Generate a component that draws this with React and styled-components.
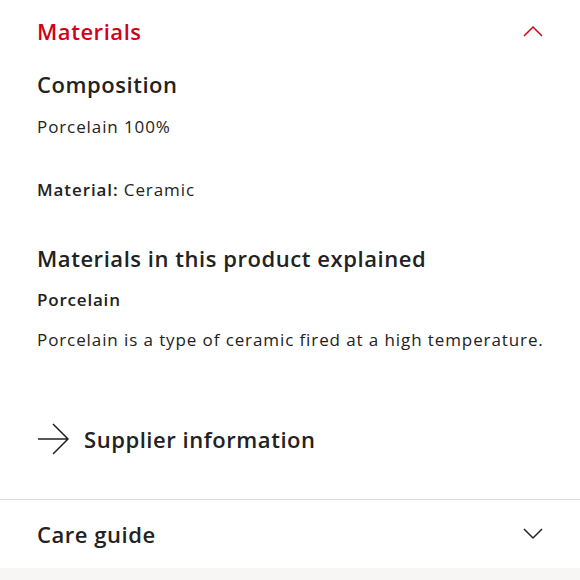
import React from 'react';
import styled, { createGlobalStyle } from 'styled-components';

const GlobalStyle = createGlobalStyle`
  body {
    margin: 0;
    background: #fff;
    font-family: "Open Sans", Lato, sans-serif;
    color: #222;
  }
`;

const Page = styled.div`
  width: 580px;
  height: 580px;
  display: flex;
  flex-direction: column;
  overflow: hidden;
`;

const Section = styled.section`
  padding: 0 37px;
  border-bottom: ${(p) => (p.divider ? '1px solid #dcdcdc' : 'none')};
`;

const Header = styled.div`
  display: flex;
  align-items: center;
  justify-content: space-between;
  height: ${(p) => p.h}px;
`;

const Title = styled.h2`
  margin: 0;
  font-size: 22px;
  font-weight: 600;
  line-height: 28px;
  letter-spacing: 0.55px;
  color: ${(p) => (p.active ? '#d0021b' : '#222')};
`;

const Heading = styled.h3`
  margin: 0;
  font-size: 22px;
  font-weight: 600;
  line-height: 28px;
  letter-spacing: 0.55px;
`;

const SubHeading = styled.h4`
  margin: 0;
  font-size: 17px;
  font-weight: 600;
  line-height: 24px;
  letter-spacing: 0.8px;
`;

const Text = styled.p`
  margin: 0;
  font-size: 17px;
  line-height: 24px;
  letter-spacing: 0.9px;
  white-space: nowrap;
  b {
    font-weight: 600;
  }
`;

const Block = styled.div`
  display: flex;
  flex-direction: column;
  margin-top: ${(p) => p.mt || 0}px;
`;

const LinkRow = styled.a`
  display: flex;
  align-items: center;
  gap: 14px;
  margin-top: ${(p) => p.mt || 0}px;
  padding-bottom: 44px;
  color: #222;
  text-decoration: none;
  font-size: 22px;
  font-weight: 600;
  letter-spacing: 0.55px;
`;

const Footer = styled.div`
  flex: 1;
  background: #f7f6f4;
`;

const Chevron = ({ up, color }) => (
  <svg width="20" height="12" viewBox="0 0 20 12" fill="none">
    <path
      d={up ? 'M1 11 L10 2 L19 11' : 'M1 1 L10 10 L19 1'}
      stroke={color}
      strokeWidth="1.5"
    />
  </svg>
);

const Arrow = () => (
  <svg width="33" height="32" viewBox="0 0 33 32" fill="none">
    <path d="M1 16 H31 M16 1 L31 16 L16 31" stroke="#222" strokeWidth="1.5" />
  </svg>
);

const App = () => (
  <Page>
    <GlobalStyle />
    <Section divider>
      <Header h={62}>
        <Title active>Materials</Title>
        <Chevron up color="#d0021b" />
      </Header>
      <Block mt={8}>
        <Heading>Composition</Heading>
        <Text style={{ marginTop: 17 }}>Porcelain 100%</Text>
      </Block>
      <Block mt={39}>
        <Text>
          <b>Material:</b> Ceramic
        </Text>
      </Block>
      <Block mt={42}>
        <Heading>Materials in this product explained</Heading>
        <SubHeading style={{ marginTop: 16 }}>Porcelain</SubHeading>
        <Text style={{ marginTop: 16 }}>
          Porcelain is a type of ceramic fired at a high temperature.
        </Text>
      </Block>
      <LinkRow mt={71} href="#">
        <Arrow />
        Supplier information
      </LinkRow>
    </Section>
    <Section>
      <Header h={68}>
        <Title>Care guide</Title>
        <Chevron color="#222" />
      </Header>
    </Section>
    <Footer />
  </Page>
);

export default App;
